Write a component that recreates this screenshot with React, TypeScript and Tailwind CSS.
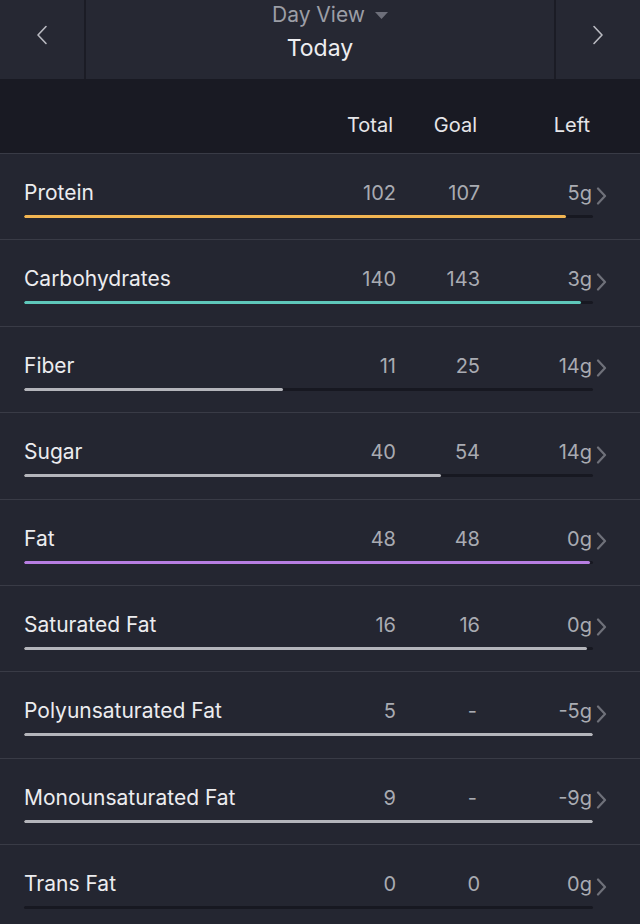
import React from "react";

type Row = { name: string; total: string; goal: string; left: string; pct: number; color: string };

const rows: Row[] = [
  { name: "Protein", total: "102", goal: "107", left: "5g", pct: 95.3, color: "bg-[#f2b552]" },
  { name: "Carbohydrates", total: "140", goal: "143", left: "3g", pct: 97.9, color: "bg-[#5ec7ba]" },
  { name: "Fiber", total: "11", goal: "25", left: "14g", pct: 45.5, color: "bg-[#b4b5bb]" },
  { name: "Sugar", total: "40", goal: "54", left: "14g", pct: 73.2, color: "bg-[#b4b5bb]" },
  { name: "Fat", total: "48", goal: "48", left: "0g", pct: 99.5, color: "bg-[#b77ee2]" },
  { name: "Saturated Fat", total: "16", goal: "16", left: "0g", pct: 99, color: "bg-[#b4b5bb]" },
  { name: "Polyunsaturated Fat", total: "5", goal: "-", left: "-5g", pct: 100, color: "bg-[#b4b5bb]" },
  { name: "Monounsaturated Fat", total: "9", goal: "-", left: "-9g", pct: 100, color: "bg-[#b4b5bb]" },
  { name: "Trans Fat", total: "0", goal: "0", left: "0g", pct: 0, color: "bg-[#b4b5bb]" },
];

function Chevron({ dir, className }: { dir: "left" | "right"; className?: string }) {
  return (
    <svg width="12" height="20" viewBox="0 0 12 20" className={className} fill="none">
      {dir === "left" ? (
        <path d="M10 1.5 L2 10 L10 18.5" stroke="currentColor" strokeWidth="1.6" strokeLinecap="round" strokeLinejoin="round" />
      ) : (
        <path d="M2 1.5 L10 10 L2 18.5" stroke="currentColor" strokeWidth="1.6" strokeLinecap="round" strokeLinejoin="round" />
      )}
    </svg>
  );
}

function RowChevron() {
  return (
    <svg width="11" height="18" viewBox="0 0 11 18" fill="none" className="text-[#6f717a]">
      <path d="M2 1.5 L9 9 L2 16.5" stroke="currentColor" strokeWidth="2.2" strokeLinecap="round" strokeLinejoin="round" />
    </svg>
  );
}

export default function App() {
  return (
    <div className="w-[640px] h-[924px] overflow-hidden bg-[#242631] font-['Inter','Liberation_Sans',sans-serif]">
      {/* Top nav */}
      <div className="flex h-[79px] bg-[#262833]">
        <div className="w-[86px] flex items-center justify-center border-r-2 border-[#1b1c25] pb-[9px]">
          <Chevron dir="left" className="text-[#b9bac1]" />
        </div>
        <div className="flex-1 flex flex-col items-center pt-[1px]">
          <div className="flex items-center gap-[10px] text-[21px] leading-[27px] text-[#9c9ea6] pl-[20px]">
            <span>Day View</span>
            <svg width="13" height="7" viewBox="0 0 13 7" className="mt-[1px]">
              <path d="M0 0 H13 L6.5 7 Z" fill="#6d6f7a" />
            </svg>
          </div>
          <div className="text-[23px] leading-[30px] text-[#eeeef0] mt-[5px]">Today</div>
        </div>
        <div className="w-[86px] flex items-center justify-center border-l-2 border-[#1b1c25] pb-[9px]">
          <Chevron dir="right" className="text-[#b9bac1]" />
        </div>
      </div>

      {/* Column header */}
      <div className="h-[74px] bg-[#191a23] flex items-start pt-[34px] pl-[24px] pr-[33px] text-[20px] leading-[24px] text-[#e6e6e9]">
        <div className="flex-1" />
        <div className="w-[80px] text-right pr-[3px]">Total</div>
        <div className="w-[84px] text-right pr-[3px]">Goal</div>
        <div className="w-[112px] text-right pr-[2px]">Left</div>
        <div className="w-[15px]" />
      </div>

      {rows.map((r) => (
        <div key={r.name} className="h-[86.4px] border-t border-[#393b46] flex flex-col pt-[27px]">
          <div className="flex items-center pl-[24px] pr-[33px] h-[24px]">
            <div className="flex-1 text-[21px] leading-[24px] text-[#ececef]">{r.name}</div>
            <div className="w-[80px] text-right text-[20px] leading-[24px] text-[#a9abb2]">{r.total}</div>
            <div className="w-[84px] text-right text-[20px] leading-[24px] text-[#a9abb2]">
              {r.goal === "-" ? <span className="pr-[3px]">-</span> : r.goal}
            </div>
            <div className="w-[112px] text-right text-[20px] leading-[24px] text-[#a9abb2]">{r.left}</div>
            <div className="w-[15px] flex justify-end pt-[5px]">
              <RowChevron />
            </div>
          </div>
          <div className="ml-[24px] mt-[10px] w-[569px] h-[3px] bg-[#171821] rounded-full overflow-hidden">
            <div className={`h-full ${r.color} rounded-full`} style={{ width: `${r.pct}%` }} />
          </div>
        </div>
      ))}
    </div>
  );
}
